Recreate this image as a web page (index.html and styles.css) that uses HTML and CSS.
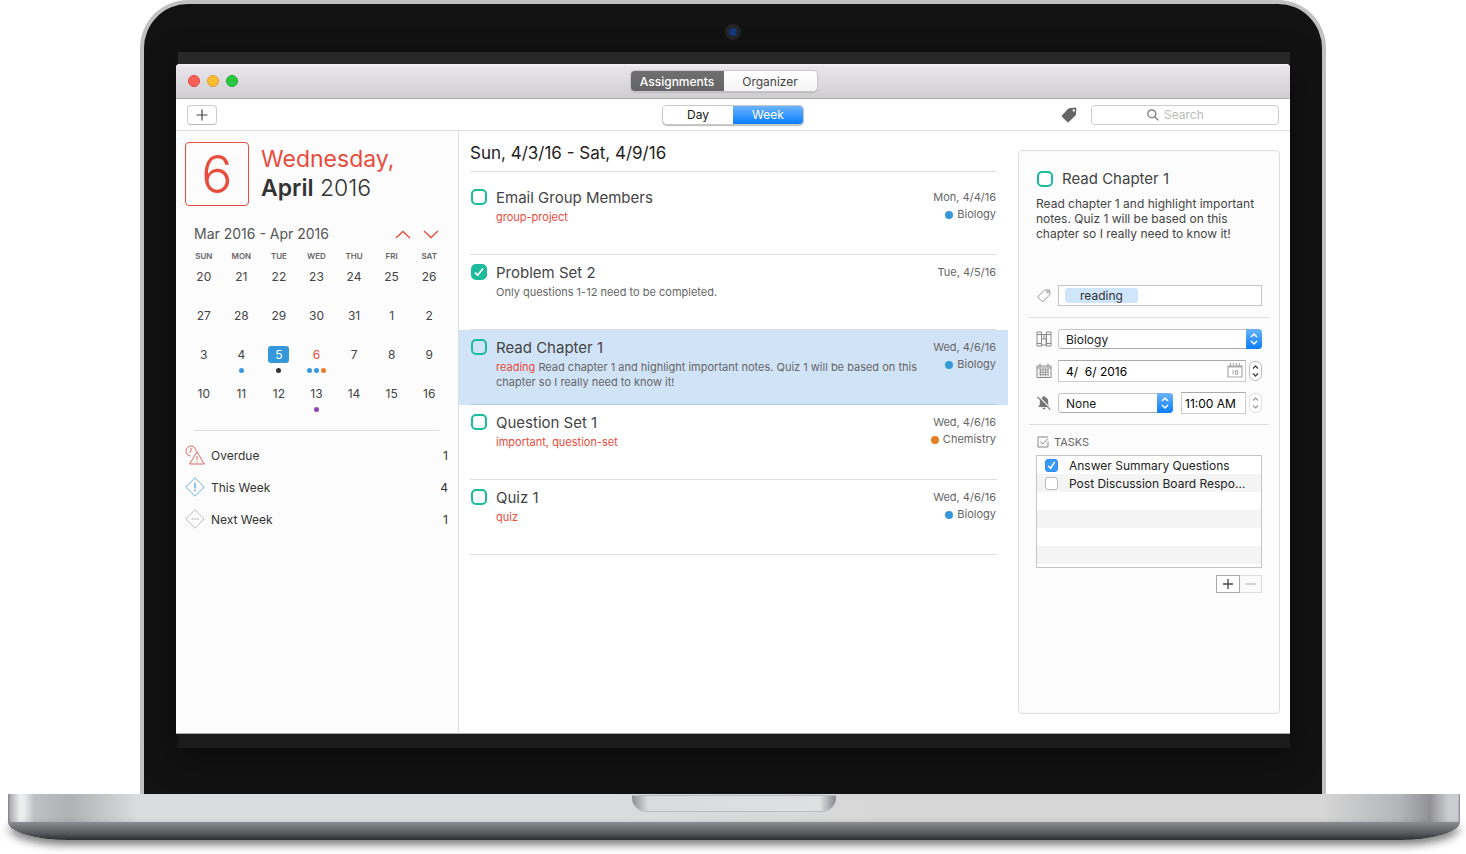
FILE: index.html
```html
<!DOCTYPE html>
<html lang="en">
<head>
<meta charset="utf-8">
<title>Assignments</title>
<link rel="stylesheet" href="styles.css">
</head>
<body>
<div class="laptop">
  <div class="lid">
    <div class="bezel"><span class="camera"></span></div>
    <div class="screen">
      <div class="app">
        <header class="titlebar">
          <div class="lights">
            <button class="light red" aria-label="Close"></button>
            <button class="light yellow" aria-label="Minimize"></button>
            <button class="light green" aria-label="Zoom"></button>
          </div>
          <nav class="segments views">
            <button class="seg dark">Assignments</button><button class="seg">Organizer</button>
          </nav>
        </header>
        <div class="toolbar">
          <div class="tool-left"><button class="add" aria-label="Add assignment"><svg width="12" height="12" viewBox="0 0 12 12"><path d="M6 .5v11M.5 6h11" stroke="#444" stroke-width="1.2"/></svg></button></div>
          <div class="segments range">
            <button class="seg">Day</button><button class="seg blue">Week</button>
          </div>
          <div class="tool-right">
            <button class="plain" aria-label="Tags"><svg width="16" height="16" viewBox="0 0 16 16"><path fill="#666" fill-rule="evenodd" d="M8 1.2 14 .6q1.400 0 1.400 1.400L14.800 7.800q0 .5-.5.900L7.600 15q-.7.600-1.300 0L1 9.700q-.6-.7 0-1.300L7.100 1.700q.4-.4.900-.5zM12.800 2.200a1.200 1.200 0 1 0 .01 2.400 1.200 1.200 0 0 0 0-2.400z"/></svg></button>
            <label class="search">
              <svg width="12" height="12" viewBox="0 0 12 12"><circle cx="4.800" cy="4.800" r="4" fill="none" stroke="#777" stroke-width="1.200"/><path d="m7.800 7.800 3.600 3.600" stroke="#777" stroke-width="1.300"/></svg>
              <input type="text" placeholder="Search" aria-label="Search">
            </label>
          </div>
        </div>
        <div class="content">
          <aside class="sidebar">
            <div class="today">
              <div class="today-num">6</div>
              <div class="today-text"><span class="weekday">Wednesday,</span><span><b>April</b> 2016</span></div>
            </div>
            <div class="month">
              <span>Mar 2016 - Apr 2016</span>
              <span class="arrows">
                <button class="plain" aria-label="Previous"><svg width="16" height="9" viewBox="0 0 16 9"><path d="m1 8 7-6.500L15 8" fill="none" stroke="#e74c3c" stroke-width="1.300"/></svg></button>
                <button class="plain" aria-label="Next"><svg width="16" height="9" viewBox="0 0 16 9"><path d="m1 1 7 6.500L15 1" fill="none" stroke="#e74c3c" stroke-width="1.300"/></svg></button>
              </span>
            </div>
            <table class="calendar">
              <thead><tr><th>SUN</th><th>MON</th><th>TUE</th><th>WED</th><th>THU</th><th>FRI</th><th>SAT</th></tr></thead>
              <tbody>
                <tr><td>20</td><td>21</td><td>22</td><td>23</td><td>24</td><td>25</td><td>26</td></tr>
                <tr><td>27</td><td>28</td><td>29</td><td>30</td><td>31</td><td>1</td><td>2</td></tr>
                <tr><td>3</td><td>4<div class="dots"><i class="dot blue-dot"></i></div></td><td><span class="picked">5</span><div class="dots"><i class="dot black-dot"></i></div></td><td class="now">6<div class="dots"><i class="dot blue-dot"></i><i class="dot blue-dot"></i><i class="dot orange-dot"></i></div></td><td>7</td><td>8</td><td>9</td></tr>
                <tr><td>10</td><td>11</td><td>12</td><td>13<div class="dots"><i class="dot purple-dot"></i></div></td><td>14</td><td>15</td><td>16</td></tr>
              </tbody>
            </table>
            <ul class="summary">
              <li><svg width="20" height="20" viewBox="0 0 20 20" fill="none" stroke="#d9695f"><path d="M5.500 11A5 5 0 1 1 11 6.500M6 3v3.200L4.300 7.600"/><path d="M12 6.800 19.300 19H4.700zM12 11v4M12 16.200v1.200"/></svg><span>Overdue</span><span class="count">1</span></li>
              <li><svg width="20" height="20" viewBox="0 0 20 20" fill="none" stroke="#6bb3e6"><path d="m10 .8 9.200 9.200-9.200 9.200L.8 10z"/><path d="M10 6v5.500M10 12.700v1.600" stroke-width="1.600"/></svg><span>This Week</span><span class="count">4</span></li>
              <li><svg width="20" height="20" viewBox="0 0 20 20" fill="none" stroke="#bbb"><path d="m10 .8 9.200 9.200-9.200 9.200L.8 10z"/><path d="M6.500 10h1.600M9.200 10h1.600M11.900 10h1.600" stroke-width="1.400"/></svg><span>Next Week</span><span class="count">1</span></li>
            </ul>
          </aside>
          <main class="main">
            <h1 class="range-title">Sun, 4/3/16 - Sat, 4/9/16</h1>
            <ul class="tasks">
              <li><article class="task"><input class="check" type="checkbox" aria-label="Email Group Members"><div class="task-body"><h2>Email Group Members</h2><p><em>group-project</em></p></div><div class="task-meta"><span>Mon, 4/4/16</span><span class="course"><i class="bullet blue-dot"></i>Biology</span></div></article></li>
              <li><article class="task"><input class="check" type="checkbox" checked aria-label="Problem Set 2"><div class="task-body"><h2>Problem Set 2</h2><p>Only questions 1-12 need to be completed.</p></div><div class="task-meta"><span>Tue, 4/5/16</span></div></article></li>
              <li class="selected"><article class="task"><input class="check" type="checkbox" aria-label="Read Chapter 1"><div class="task-body"><h2>Read Chapter 1</h2><p><em>reading</em> Read chapter 1 and highlight important notes. Quiz 1 will be based on this chapter so I really need to know it!</p></div><div class="task-meta"><span>Wed, 4/6/16</span><span class="course"><i class="bullet blue-dot"></i>Biology</span></div></article></li>
              <li><article class="task"><input class="check" type="checkbox" aria-label="Question Set 1"><div class="task-body"><h2>Question Set 1</h2><p><em>important, question-set</em></p></div><div class="task-meta"><span>Wed, 4/6/16</span><span class="course"><i class="bullet orange-dot"></i>Chemistry</span></div></article></li>
              <li><article class="task"><input class="check" type="checkbox" aria-label="Quiz 1"><div class="task-body"><h2>Quiz 1</h2><p><em>quiz</em></p></div><div class="task-meta"><span>Wed, 4/6/16</span><span class="course"><i class="bullet blue-dot"></i>Biology</span></div></article></li>
            </ul>
          </main>
          <section class="detail">
            <div class="card">
              <div class="group intro">
                <label class="detail-title"><input class="check" type="checkbox">Read Chapter 1</label>
                <p>Read chapter 1 and highlight important notes. Quiz 1 will be based on this chapter so I really need to know it!</p>
                <div class="field">
                  <svg width="16" height="16" viewBox="0 0 16 16" fill="none" stroke="#999"><path d="M8.500 2.200 13.500 1.800l.5 4.700L6.800 14 1.500 8.900z"/><circle cx="11.600" cy="4" r=".9"/></svg>
                  <div class="tokens"><span class="token">reading</span><input type="text" aria-label="Add tag"></div>
                </div>
              </div>
              <div class="group form">
                <div class="field">
                  <svg width="16" height="16" viewBox="0 0 16 16" fill="none" stroke="#888"><path d="M1 1h4.500v14H1zM5.500 3.500h4.800V14H5.500zM10.300 1H15v14h-4.700zM1 3.500h4.500M1 12.500h4.500M10.300 3.500H15M10.300 12.500H15M7.900 3.500V8M5.500 8h4.800"/></svg>
                  <span class="pick"><select aria-label="Course"><option>Biology</option></select><svg class="knob" width="16" height="20" viewBox="0 0 16 20"><path d="m5 8 3-3 3 3M5 12l3 3 3-3" fill="none" stroke="#fff" stroke-width="1.500"/></svg></span>
                </div>
                <div class="field">
                  <svg width="16" height="16" viewBox="0 0 16 16" fill="none" stroke="#888"><path d="M1 3h14v11.500H1zM1 5h14M4 .5V4M12 .5V4"/><path d="M3 7h10M3 9.300h10M3 11.600h10M4.500 6v7.500M7 6v7.500M9.500 6v7.500M12 6v7.500" stroke-width=".8"/></svg>
                  <span class="dateline"><input class="box" type="text" value="4/  6/ 2016" aria-label="Due date"><svg class="mini" width="16" height="16" viewBox="0 0 16 16" fill="none" stroke="#aaa"><path d="M1 4h14v11H1zM1 5h14M3.500 1v3M6.500 1v3M9.500 1v3M12.500 1v3" stroke-width="1.200"/><path d="M6 8v4.500M8.500 8.500h2v4h-2z"/></svg></span>
                  <button class="stepper" aria-label="Change date"><svg width="11" height="18" viewBox="0 0 11 18"><path d="m3 6.500 2.500-2.500L8 6.500M3 11.500 5.500 14 8 11.500" fill="none" stroke="#444" stroke-width="1.400"/></svg></button>
                </div>
                <div class="field">
                  <svg width="16" height="16" viewBox="0 0 16 16"><path fill="#777" d="M8 1q1 0 1 1.300 3.200.8 3.200 4.200v3l1.600 2.500H2.200l1.600-2.500v-3Q3.800 3.100 7 2.300 7 1 8 1zM6.500 12.800h3Q9.500 14.500 8 14.500t-1.500-1.700z"/><path d="M2.200 1 15 13.800" stroke="#fff" stroke-width="1.200"/><path d="M1.500 1.800 14.300 14.600" stroke="#777" stroke-width="1.200"/></svg>
                  <span class="pick alarm"><select aria-label="Reminder"><option>None</option></select><svg class="knob" width="16" height="20" viewBox="0 0 16 20"><path d="m5 8 3-3 3 3M5 12l3 3 3-3" fill="none" stroke="#fff" stroke-width="1.500"/></svg></span>
                  <input class="box time" type="text" value="11:00 AM" aria-label="Reminder time">
                  <button class="stepper faded" aria-label="Change time"><svg width="11" height="18" viewBox="0 0 11 18"><path d="m3 6.500 2.500-2.500L8 6.500M3 11.500 5.500 14 8 11.500" fill="none" stroke="#999" stroke-width="1.200"/></svg></button>
                </div>
              </div>
              <div class="group todo">
                <div class="todo-head"><svg width="12" height="12" viewBox="0 0 12 12" fill="none" stroke="#888"><path d="M11 5.500v5.500H1V1h10"/><path d="m3.500 5.500 2.300 2.500L11 2.500"/></svg>TASKS</div>
                <ul class="todo-list">
                  <li><label><input class="mac-check" type="checkbox" checked><span>Answer Summary Questions</span></label></li>
                  <li><label><input class="mac-check" type="checkbox"><span>Post Discussion Board Response</span></label></li>
                </ul>
                <div class="todo-buttons"><button aria-label="Add task"><svg width="12" height="12" viewBox="0 0 12 12"><path d="M6 1v10M1 6h10" stroke="#444" stroke-width="1.300"/></svg></button><button class="off" aria-label="Remove task"><svg width="12" height="12" viewBox="0 0 12 12"><path d="M1 6h10" stroke="#bbb" stroke-width="1.200"/></svg></button></div>
              </div>
            </div>
          </section>
        </div>
      </div>
    </div>
  </div>
  <div class="base">
    <div class="deck"><div class="notch"></div></div>
    <div class="belly"></div>
  </div>
</div>
</body>
</html>
```
FILE: styles.css
```css
* { box-sizing: border-box; }
body { margin: 0; background: #fff; font-family: Inter, "Liberation Sans", sans-serif; font-size: 12px; color: #444; }
button, input, select { font: inherit; color: inherit; margin: 0; padding: 0; }
button { border: 0; background: none; }
svg { display: block; flex: none; }
h1, h2, p, ul { margin: 0; padding: 0; font-weight: 400; }
ul { list-style: none; }
em { font-style: normal; color: #e74c3c; }

.laptop { min-height: 100vh; display: flex; flex-direction: column; }
.lid { flex: 1; display: flex; flex-direction: column; margin: 0 140px; padding: 0 32px 46px; background: #121212; border: 4px solid #c1c1c1; border-bottom: 0; border-radius: 48px 48px 0 0; }
.bezel { height: 48px; padding-top: 20px; display: flex; justify-content: center; }
.camera { width: 16px; height: 16px; border-radius: 50%; border: 4px solid #242424; background: #13387a; }
.screen { flex: 1; display: flex; padding: 12px 0 14px; background: linear-gradient(90deg, #121212 2px, transparent 2px), linear-gradient(#282828 12px, #1b1b1b 12px); box-shadow: 0 10px 30px rgba(0, 0, 0, .4); }
.app { flex: 1; display: flex; flex-direction: column; background: #fff; border-radius: 4px 4px 0 0; overflow: hidden; border-bottom: 1px solid #aaa; }

.titlebar { height: 35px; display: grid; grid-template-columns: 1fr auto 1fr; align-items: center; padding: 0 31px 0 12px; background: linear-gradient(#f4f3f4, #e7e5e7 3px, #d0ced0); border-bottom: 1px solid #b0aeb0; }
.lights { display: flex; gap: 7px; }
.light { width: 12px; height: 12px; border-radius: 50%; border: 1px solid #e2463f; background: #fc605b; }
.yellow { border-color: #dea032; background: #fdbc2f; }
.green { border-color: #1daa33; background: #28c941; }
.segments { display: flex; border-radius: 4px; box-shadow: 0 0 0 1px #c8c8c8, 0 1px 1px 1px #bbb; }
.seg { flex: 1; height: 20px; background: #fff; border-radius: 0 4px 4px 0; }
.seg:first-child { border-radius: 4px 0 0 4px; }
.views .seg { width: 93px; background: linear-gradient(#fff, #f4f4f4); }
.views .dark { background: linear-gradient(#6f6f6f, #646464); color: #fff; font-weight: 500; }
.range { color: #222; }
.range .seg { width: 70px; height: 18px; }
.range .blue { background: linear-gradient(#6cb3fa, #087eff); color: #fff; }

.toolbar { height: 32px; display: grid; grid-template-columns: 1fr auto 1fr; align-items: center; padding: 0 11px; border-bottom: 1px solid #ddd; }
.add { width: 30px; height: 20px; display: grid; place-items: center; border: 1px solid #ccc; border-bottom-color: #bbb; border-radius: 4px; background: #fff; }
.tool-right { display: flex; justify-content: flex-end; align-items: center; gap: 14px; }
.search { width: 188px; height: 20px; display: flex; align-items: center; gap: 5px; padding-left: 55px; border: 1px solid #ccc; border-radius: 4px; }
.search input { width: 100px; border: 0; outline: 0; background: none; }
.search input::placeholder { color: #bbb; }

.content { flex: 1; display: flex; }
.sidebar { flex: 0 0 283px; padding: 11px 10px 0 9px; background: #fcfcfc; border-right: 1px solid #ddd; }
.today { display: flex; gap: 12px; align-items: center; color: #333; }
.today-num { width: 64px; height: 64px; display: grid; place-items: center; border: 1px solid #e74c3c; border-radius: 4px; color: #e74c3c; font-size: 52px; font-weight: 300; line-height: 64px; }
.today-text { display: flex; flex-direction: column; font-size: 23px; line-height: 29px; font-weight: 300; }
.today-text b { font-weight: 600; }
.weekday { color: #e74c3c; font-weight: 400; }
.month { display: flex; justify-content: space-between; align-items: center; padding: 0 9px; margin-top: 18px; font-size: 14px; line-height: 20px; color: #555; }
.arrows { display: flex; gap: 12px; }
.calendar { width: 100%; table-layout: fixed; border-collapse: collapse; margin-top: 6px; text-align: center; }
.calendar th { padding: 0; height: 12px; font-size: 8px; font-weight: 600; color: #666; }
.calendar td { padding: 6px 0 0; height: 39px; vertical-align: top; line-height: 17px; }
.calendar td.now { color: #e74c3c; }
.picked { display: block; width: 21px; margin: 0 auto; border-radius: 3px; background: #3498db; color: #fff; }
.dots { display: flex; justify-content: center; gap: 2px; height: 5px; margin-top: 5px; }
.dot { width: 5px; height: 5px; border-radius: 50%; }
.bullet { width: 8px; height: 8px; border-radius: 50%; }
.blue-dot { background: #3498db; }
.black-dot { background: #333; }
.orange-dot { background: #e67e22; }
.purple-dot { background: #8e44ad; }
.summary { margin-top: 12px; color: #333; }
.summary::before { content: ""; display: block; margin: 0 9px 8px; border-top: 1px solid #ddd; }
.summary li { display: flex; align-items: center; gap: 6px; height: 32px; }
.count { margin-left: auto; }

.main { flex: 1; min-width: 0; }
.range-title { height: 41px; margin: 0 11px 8px; border-bottom: 1px solid #ddd; font-size: 17px; line-height: 44px; color: #222; }
.tasks li { padding: 0 11px; }
.tasks .selected { background: #d1e3f7; }
.task { min-height: 75px; display: flex; gap: 9px; border-bottom: 1px solid #ddd; color: #666; font-size: 11px; }
.selected .task { border-color: #b4cbe4; }
.check { appearance: none; flex: none; width: 16px; height: 16px; border: 2px solid #1abc9c; border-radius: 5px; background: #fff; }
.task .check { margin: 9px 0 0 1px; }
.check:checked { background: #1abc9c url("data:image/svg+xml,%3Csvg xmlns='http://www.w3.org/2000/svg' viewBox='0 0 12 12'%3E%3Cpath d='m2 6.500 2.700 2.700L10 2.500' fill='none' stroke='white' stroke-width='1.800'/%3E%3C/svg%3E"); }
.selected .check { background: #d1e3f7; }
.task-body { flex: 1; min-width: 0; padding-top: 8px; line-height: 15px; }
.task-body h2 { margin-bottom: 2px; font-size: 15px; line-height: 20px; color: #444; }
.task-meta { display: flex; flex-direction: column; align-items: flex-end; padding: 9px 1px 0 0; line-height: 17px; }
.course { display: flex; align-items: center; gap: 4px; }

.detail { flex: 0 0 282px; min-width: 0; display: flex; padding: 19px 10px; }
.card { flex: 1; min-width: 0; padding: 0 10px; background: #fcfcfc; border: 1px solid #ddd; border-radius: 4px; }
.group { padding: 0 7px; border-bottom: 1px solid #ddd; }
.intro { padding-top: 18px; padding-bottom: 11px; }
.detail-title { display: flex; align-items: center; gap: 9px; padding-left: 1px; margin-bottom: 7px; font-size: 15px; line-height: 20px; }
.intro p { min-height: 89px; font-size: 12px; line-height: 15px; }
.field { display: flex; align-items: center; min-height: 22px; }
.intro .field { min-height: 21px; }
.field > svg:first-child { margin-right: 6px; }
.tokens { flex: 1; min-width: 0; height: 21px; display: flex; align-items: center; padding: 2px 6px; border: 1px solid #c4c4c4; background: #fff; }
.token { padding: 0 15px; border-radius: 3px; background: #cfe5fa; line-height: 15px; color: #333; }
.tokens input { flex: 1; min-width: 0; border: 0; outline: 0; background: none; }
.form { display: flex; flex-direction: column; gap: 10px; padding-top: 10px; padding-bottom: 10px; color: #222; }
.pick { position: relative; flex: 1; min-width: 0; display: flex; height: 20px; }
.pick select { appearance: none; width: 100%; padding: 0 20px 0 7px; border: 1px solid #c4c4c4; border-bottom-color: #aaa; border-radius: 4px; background: #fff; }
.knob { position: absolute; right: 0; top: 0; border-radius: 0 4px 4px 0; background: linear-gradient(#6cb3fa, #087eff); }
.alarm { flex: 1; margin-right: 8px; }
.dateline { position: relative; flex: 1; min-width: 0; display: flex; }
.box { width: 100%; height: 22px; padding-left: 7px; border: 1px solid #ccc; border-top-color: #aaa; background: #fff; color: #000; white-space: pre; }
.time { width: 65px; padding-left: 3px; }
.mini { position: absolute; right: 3px; top: 2px; }
.stepper { margin-left: 3px; width: 13px; height: 20px; border: 1px solid #bbb; border-radius: 6px; background: #fff; }
.faded { border-color: #ddd; }
.todo { border: 0; }
.todo-head { display: flex; align-items: center; gap: 5px; padding-left: 1px; margin-top: 9px; line-height: 16px; font-size: 11px; color: #666; }
.todo-list { height: 113px; margin-top: 5px; border: 1px solid #c4c4c4; background: repeating-linear-gradient(#fff 0 18px, #f4f4f4 18px 36px); color: #222; }
.todo-list label { display: flex; align-items: center; gap: 11px; height: 18px; padding: 0 14px 0 8px; }
.todo-list span { overflow: hidden; white-space: nowrap; text-overflow: ellipsis; }
.mac-check { appearance: none; flex: none; width: 13px; height: 13px; border: 1px solid #bbb; border-radius: 3px; background: #fff; }
.mac-check:checked { border-color: #2f8cf5; background: #3b99fc url("data:image/svg+xml,%3Csvg xmlns='http://www.w3.org/2000/svg' viewBox='0 0 12 12'%3E%3Cpath d='m2.500 6.500 2.500 2.500 4.500-7' fill='none' stroke='white' stroke-width='1.600'/%3E%3C/svg%3E"); }
.todo-buttons { display: flex; justify-content: flex-end; margin-top: 7px; }
.todo-buttons button { width: 24px; height: 18px; display: grid; place-items: center; border: 1px solid #aaa; background: #fff; }
.todo-buttons .off { width: 22px; border-color: #ddd; border-left: 0; background: #fafafa; }

.base { margin: 0 6px 14px 8px; }
.deck { height: 28px; padding-top: 1px; display: flex; justify-content: center; background: linear-gradient(90deg, #85858b 0, #b5b5b9 3px, #eef0ef 12px, #ebedec 16px, #bfc0c5 26px, #b0b1b3 62px, #dbdcde 130px, #dbdcde 40%, #d7d7d7 60%, #d7d7d7 calc(100% - 140px), #b4b5b9 calc(100% - 60px), #929296 calc(100% - 30px), #cbccd0 calc(100% - 12px), #cbccd0 calc(100% - 2px), #808085 100%); }
.notch { width: 204px; height: 17px; border-radius: 0 0 14px 14px; border-top: 1px solid #bbb; border-bottom: 1px solid #bcbebe; background: linear-gradient(90deg, #8d8f92, #dadbdd 16px, #dfe0e2 188px, #86878d); }
.belly { height: 18px; border-radius: 0 0 60px 60px / 0 0 18px 18px; background: linear-gradient(#8c8d92, #5b5c60 60%, #2c2d2f); box-shadow: 0 5px 8px rgba(0, 0, 0, .5); }
```
